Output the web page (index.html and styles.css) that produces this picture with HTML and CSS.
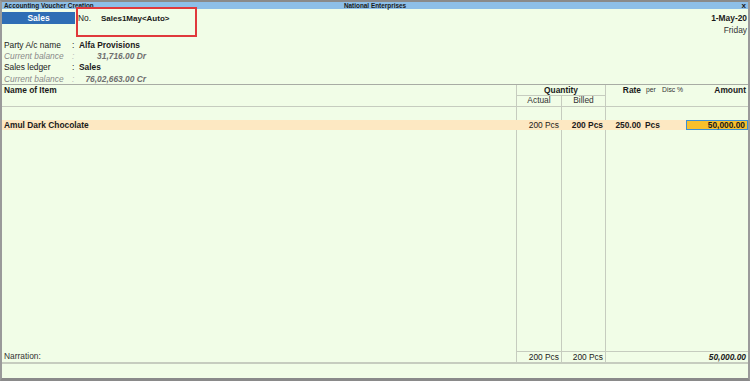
FILE: index.html
```html
<!DOCTYPE html>
<html lang="en">
<head>
    <meta charset="UTF-8">
    <title>Accounting Voucher Creation</title>
    <link rel="stylesheet" href="styles.css">
</head>
<body>
    <div class="window">
        <div class="titlebar">
            <span class="title-left">Accounting Voucher Creation</span>
            <span class="title-center">National Enterprises</span>
            <span class="title-close">x</span>
        </div>

        <div class="head">
            <div class="voucher">
                <div class="vtype">Sales</div>
                <span class="no-label">No.</span>
                <span class="no-value">Sales1May&lt;Auto&gt;</span>
            </div>
            <div class="date">
                <div class="date-value">1-May-20</div>
                <div class="day">Friday</div>
            </div>
            <div class="highlight-box"></div>
        </div>

        <div class="party">
            <span class="lbl">Party A/c name</span><span class="colon">:</span><span class="val">Alfa Provisions</span>
            <span class="lbl sub">Current balance</span><span class="colon sub">:</span><span class="bal">31,716.00 Dr</span>
            <span class="lbl">Sales ledger</span><span class="colon">:</span><span class="val">Sales</span>
            <span class="lbl sub">Current balance</span><span class="colon sub">:</span><span class="bal">76,02,663.00 Cr</span>
        </div>

        <div class="items">
            <div class="row hdr1">
                <div class="c name b">Name of Item</div>
                <div class="c qty b vl">Quantity</div>
                <div class="c rate b vl">Rate</div>
                <div class="c per small">per</div>
                <div class="c disc small">Disc %</div>
                <div class="c amt b">Amount</div>
            </div>
            <div class="row hdr2">
                <div class="c name"></div>
                <div class="c num-c vl">Actual</div>
                <div class="c num-c vl">Billed</div>
                <div class="c vl"></div>
                <div class="c"></div>
                <div class="c"></div>
                <div class="c"></div>
            </div>
            <div class="row blank">
                <div class="c name"></div>
                <div class="c vl"></div>
                <div class="c vl"></div>
                <div class="c vl"></div>
                <div class="c"></div>
                <div class="c"></div>
                <div class="c"></div>
            </div>
            <div class="row item">
                <div class="c name b">Amul Dark Chocolate</div>
                <div class="c num">200 Pcs</div>
                <div class="c num b">200 Pcs</div>
                <div class="c num b">250.00</div>
                <div class="c b">Pcs</div>
                <div class="c"></div>
                <div class="c num b cur">50,000.00</div>
            </div>
            <div class="row filler">
                <div class="c name"></div>
                <div class="c vl"></div>
                <div class="c vl"></div>
                <div class="c vl"></div>
                <div class="c"></div>
                <div class="c"></div>
                <div class="c"></div>
            </div>
            <div class="row total">
                <div class="c name">Narration:</div>
                <div class="c num vl tl">200 Pcs</div>
                <div class="c num vl tl">200 Pcs</div>
                <div class="c vl tl"></div>
                <div class="c tl"></div>
                <div class="c tl"></div>
                <div class="c num b i tl">50,000.00</div>
            </div>
            <div class="row foot"></div>
        </div>
    </div>
</body>
</html>
```

FILE: styles.css
```css
body {
    margin: 0;
    font-family: 'Liberation Sans', Arial, sans-serif;
    font-size: 8.4px;
    color: #1a1a1a;
}

.window {
    position: relative;
    width: 750px;
    height: 381px;
    box-sizing: border-box;
    background-color: #f1fde7;
    border-top: 2px solid #8a8a8a;
    border-left: 2px solid #9a9a9a;
    border-right: 2px solid #9a9a9a;
    border-bottom: 3px solid #8a8a8a;
    display: flex;
    flex-direction: column;
}

.titlebar {
    height: 7px;
    background-color: #8dbfe8;
    display: flex;
    align-items: center;
    font-size: 6.4px;
    font-weight: bold;
    position: relative;
    padding: 0 2px;
}

.title-center {
    position: absolute;
    left: 0;
    right: 0;
    text-align: center;
}

.title-close {
    margin-left: auto;
    font-size: 8px;
}

.head {
    display: flex;
    justify-content: space-between;
    padding-top: 3px;
    height: 27px;
}

.voucher {
    display: flex;
    align-items: center;
    height: 12px;
}

.vtype {
    width: 73px;
    height: 12px;
    line-height: 12px;
    background-color: #2f6db5;
    color: #fff;
    font-weight: bold;
    text-align: center;
    font-size: 8.5px;
}

.no-label {
    margin-left: 3px;
    width: 23px;
}

.no-value {
    font-weight: bold;
    font-size: 8px;
}

.date {
    text-align: right;
    padding-right: 1px;
    line-height: 12px;
}

.date-value {
    font-weight: bold;
}

.day {
    color: #333;
}

.highlight-box {
    position: absolute;
    left: 74px;
    top: 5px;
    width: 117px;
    height: 26px;
    border: 2px solid #e0393c;
}

.party {
    display: grid;
    grid-template-columns: 68px 7px auto;
    grid-auto-rows: 11.3px;
    align-items: center;
    padding-left: 2px;
    height: 45px;
    justify-content: start;
}

.lbl.sub, .colon.sub {
    color: #8a8a8a;
    font-style: italic;
}

.colon.sub {
    color: #b8b8b8;
}

.val {
    font-weight: bold;
}

.bal {
    width: 67px;
    text-align: right;
    font-style: italic;
    font-weight: bold;
    color: #6e6e6e;
}

.items {
    flex: 1;
    display: flex;
    flex-direction: column;
    border-top: 1px solid #a8aca4;
}

.row {
    display: grid;
    grid-template-columns: 1fr 45px 44px 38px 19px 24px 62px;
}

.c {
    box-sizing: border-box;
    white-space: nowrap;
    padding: 0 2px;
}

.vl {
    border-left: 1px solid #c6ccbf;
}

.b {
    font-weight: bold;
}

.i {
    font-style: italic;
}

.num {
    text-align: right;
}

.num-c {
    text-align: center;
    color: #333;
}

.hdr1 {
    height: 10px;
    line-height: 10px;
}

.hdr1 .qty {
    grid-column: 2 / 4;
    text-align: center;
    border-bottom: 1px solid #c6ccbf;
}

.hdr1 .rate {
    text-align: right;
}

.hdr1 .amt {
    text-align: right;
}

.small {
    font-size: 6.8px;
    color: #333;
}

.hdr1 .per {
    padding-left: 3px;
}

.hdr1 .disc {
    padding: 0;
}

.hdr2 {
    height: 11px;
    line-height: 11px;
    border-bottom: 1px solid #c6ccbf;
}

.blank {
    height: 13px;
}

.item {
    height: 10px;
    line-height: 10px;
    background-color: #fde8c2;
}

.item .cur {
    background-color: #f8c02c;
    border: 1px solid #3d8fd2;
    line-height: 8px;
}

.filler {
    flex: 1;
}

.total {
    height: 11px;
    line-height: 11px;
    border-bottom: 2px solid #c6ccbf;
}

.tl {
    border-top: 1px solid #c6ccbf;
}

.total .name {
    color: #333;
}

.foot {
    height: 14px;
}
```
